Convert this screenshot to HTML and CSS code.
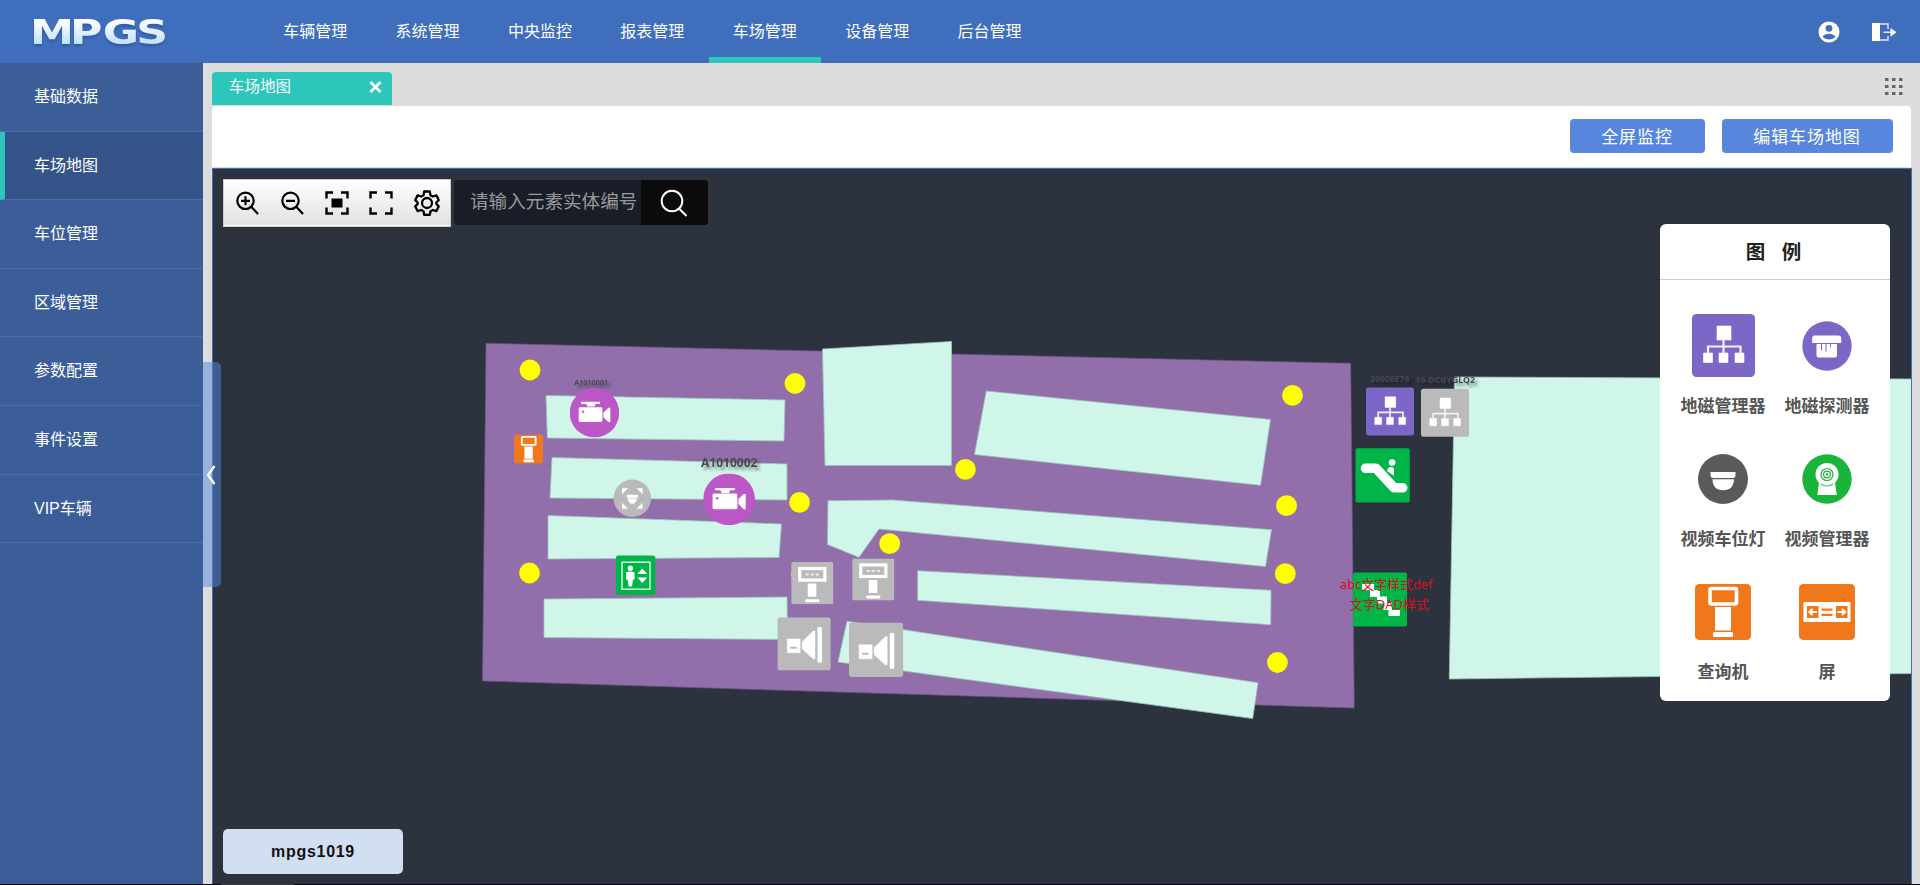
FILE: index.html
```html
<!DOCTYPE html>
<html lang="zh-CN">
<head>
<meta charset="utf-8">
<title>MPGS</title>
<link rel="stylesheet" href="styles.css">
</head>
<body>
<svg class="defs" width="0" height="0" aria-hidden="true">
  <defs>
    <symbol id="net" viewBox="0 0 63 63">
      <path d="M25 12h14v14h-14zM11.500 39h9v9.500h-9zM27 39h9v9.500h-9zM43 39h9v9.500h-9z" fill="#fff" stroke="#fff" stroke-width=".6"/>
      <path d="M31.500 25v15M16 40v-7.500h32.500v7.500" fill="none" stroke="#f3effb" stroke-width="2.200"/>
    </symbol>
    <symbol id="camera" viewBox="0 0 50 50">
      <circle cx="25" cy="25" r="25" fill="#bb57c6"/>
      <path d="M11.500 14h19v2.200h-4.500l-1 2.600h-7l-1.500-2.600h-5z" fill="#fff"/>
      <rect x="9" y="19.500" width="24" height="15" rx="1.500" fill="#fff"/>
      <path d="M34 25l5-5h2v14.500h-2l-5-5z" fill="#fff"/>
      <circle cx="13.500" cy="24" r="1.200" fill="#bb57c6"/>
    </symbol>
    <symbol id="query" viewBox="0 0 56 56">
      <rect width="56" height="56" rx="4.500" fill="#f0781a"/>
      <rect x="15" y="4.500" width="26.500" height="15.500" rx="1.500" fill="none" stroke="#fff" stroke-width="3.600"/>
      <path d="M20 23h16v23.500h-16z" fill="#fff"/>
      <rect x="18" y="48" width="20" height="5" rx="1" fill="#fff"/>
    </symbol>
    <symbol id="kiosk" viewBox="0 0 42 42">
      <rect width="42" height="42" rx="2" fill="#bababa"/>
      <rect x="8.500" y="6.500" width="25" height="11.500" fill="none" stroke="#fff" stroke-width="3.200"/>
      <path d="M14.500 11.500h3v2h-3zM19.500 11.500h3v2h-3zM24.500 11.500h3v2h-3z" fill="#eee"/>
      <path d="M16.500 21.500h8.500v13h-8.500z" fill="#fff"/>
      <rect x="14" y="37" width="14" height="3" rx="1" fill="#fff"/>
    </symbol>
    <symbol id="speaker" viewBox="0 0 54 54">
      <rect width="54" height="54" rx="3" fill="#bababa"/>
      <path d="M10 22h13v14h-13zM25 25l11-11h2v28h-2l-11-10z" fill="#fff" stroke="#fff" stroke-width=".5"/>
      <path d="M13 31h6.500" stroke="#bababa" stroke-width="2"/>
      <rect x="40.500" y="10" width="4.500" height="36" rx="1.500" fill="#fff"/>
    </symbol>
    <linearGradient id="logoFill" x1="0" y1="0" x2="0" y2="1">
      <stop offset="0.200" stop-color="#ffffff"/>
      <stop offset="0.900" stop-color="#b9dcff"/>
    </linearGradient>
  </defs>
</svg>

<header class="topbar">
  <div class="brand">
    <svg class="logo" width="170" height="44" viewBox="0 0 170 44">
      <text transform="scale(1.300 1)" x="5.400 36.100 61.400 87.200" y="36">MPGS</text>
    </svg>
  </div>
  <nav class="menu">
    <a class="menu-item">车辆管理</a>
    <a class="menu-item">系统管理</a>
    <a class="menu-item">中央监控</a>
    <a class="menu-item">报表管理</a>
    <a class="menu-item active">车场管理</a>
    <a class="menu-item">设备管理</a>
    <a class="menu-item">后台管理</a>
  </nav>
  <div class="account">
    <svg width="22" height="22" viewBox="0 0 22 22">
      <circle cx="11" cy="11" r="10.500" fill="#fff"/>
      <circle cx="11" cy="7.300" r="3.400" fill="#3f6ebc"/>
      <path d="M4.600 15.500c2.500-3.600 10.300-3.600 12.800 0c-2.500 4-10.300 4-12.800 0z" fill="#3f6ebc"/>
    </svg>
    <svg width="25" height="20" viewBox="0 0 25 20">
      <path d="M0 1h8v18h-8z" fill="#fff"/>
      <path d="M7 2h9v5M7 18h9v-4M11.500 10.300h8" fill="none" stroke="#dce6f6" stroke-width="1.400"/>
      <path d="M18.500 6l6 4.300-6 4.400z" fill="#fff"/>
    </svg>
  </div>
</header>

<div class="body">
  <aside class="sidebar">
    <a class="side-item">基础数据</a>
    <a class="side-item active">车场地图</a>
    <a class="side-item">车位管理</a>
    <a class="side-item">区域管理</a>
    <a class="side-item">参数配置</a>
    <a class="side-item">事件设置</a>
    <a class="side-item">VIP车辆</a>
    <div class="collapse">
      <svg width="10" height="20" viewBox="0 0 10 20"><path d="M8.500 1L2 10l6.500 9" fill="none" stroke="#fff" stroke-width="2.200"/></svg>
    </div>
  </aside>

  <main class="main">
    <div class="tabs">
      <div class="tab">
        <span>车场地图</span>
        <svg width="13" height="12" viewBox="0 0 13 12"><path d="M1.500 1l10 10M11.500 1l-10 10" stroke="#fff" stroke-width="2.800"/></svg>
      </div>
      <svg class="grid-icon" width="18" height="18" viewBox="0 0 18 18">
        <path d="M0 0h3.500v3h-3.500zM7 0h3.500v3h-3.500zM14 0h3.500v3h-3.500zM0 7h3.500v3h-3.500zM7 7h3.500v3h-3.500zM14 7h3.500v3h-3.500zM0 14h3.500v3h-3.500zM7 14h3.500v3h-3.500zM14 14h3.500v3h-3.500z" fill="#666"/>
      </svg>
    </div>

    <div class="actions">
      <button class="btn">全屏监控</button>
      <button class="btn wide">编辑车场地图</button>
    </div>

    <section class="map">
      <svg class="plan" width="1698" height="715" viewBox="213 169 1698 715">
        <polygon class="floor" points="486,343.300 1350.700,363.300 1354.300,708 482.500,681"/>
        <g class="block">
          <polygon points="546,395.500 785,400 784,441 547.300,438"/>
          <polygon points="552,457.500 787,464 787,500 550,498"/>
          <polygon points="548,515.500 781.500,524 779,557.500 548,559"/>
          <polygon points="544,599 787,597 787.500,639.500 544,637.500"/>
          <polygon points="822.500,349 951.500,341.500 951.500,465.500 825,465.500"/>
          <polygon points="986.300,391 1270.500,419.500 1260.500,485.300 974.500,454.500"/>
          <polygon points="828,500.700 893,500 1271.500,529.700 1265.500,566.500 879,529 859,557.300 827.500,544.500"/>
          <polygon points="917.700,570.700 1271,590.300 1270.700,624.700 917.700,600.300"/>
          <polygon points="847,621.300 1258,682.700 1252.700,718.500 838,662"/>
          <polygon points="1454.500,377 1912,379 1912,673.500 1449.300,679"/>
        </g>
        <g class="lamp">
          <circle cx="530" cy="370" r="10.400"/>
          <circle cx="795" cy="383.500" r="10.400"/>
          <circle cx="799.600" cy="502.400" r="10.400"/>
          <circle cx="529.500" cy="573" r="10.400"/>
          <circle cx="801.500" cy="574" r="10.400"/>
          <circle cx="965.400" cy="469.400" r="10.400"/>
          <circle cx="889.700" cy="543.700" r="10.400"/>
          <circle cx="1292.500" cy="395.400" r="10.400"/>
          <circle cx="1286.500" cy="505.700" r="10.400"/>
          <circle cx="1285.300" cy="573.700" r="10.400"/>
          <circle cx="1277.400" cy="662.500" r="10.400"/>
        </g>

        <text class="tag shadow" x="574.200" y="384.600" font-size="7.500" textLength="34" lengthAdjust="spacingAndGlyphs">A1010001</text>
        <use href="#camera" x="569.800" y="388" width="49.400" height="49.400"/>
        <use href="#camera" x="703.200" y="473.400" width="51.800" height="51.800"/>
        <text class="tag shadow" x="701" y="466.600" font-size="11.500" textLength="56.500" lengthAdjust="spacingAndGlyphs">A1010002</text>
        <use href="#query" x="514" y="434.500" width="29.200" height="29.200"/>

        <g transform="translate(632.300 498.300)">
          <circle r="18.700" fill="#bababa"/>
          <path d="M-10.300-4v-6h6zM10.300-4v-6h-6zM-10.300 4.500v6h6zM10.300 4.500v6h-6z" fill="#fff"/>
          <path d="M-5.500-3.500h11v3h-1c0 8-9 8-9 0h-1z" fill="#fff"/>
          <path d="M-5 0h10" stroke="#ccc" stroke-width=".8"/>
        </g>

        <g transform="translate(616 555.500)">
          <rect width="39.300" height="39.500" rx="2" fill="#00b548"/>
          <rect x="6" y="6.700" width="28" height="27" fill="none" stroke="#e5f8ec" stroke-width="1.400"/>
          <circle cx="14.300" cy="12.700" r="2.600" fill="#fff"/>
          <path d="M10 17q4.300-2 8.600 0v7h-1.600l-1 7h-3.400l-1-7h-1.600zM21.300 18.500l5-5.500 5 5.500zM21.300 22l5 5.500 5-5.500z" fill="#fff"/>
        </g>

        <use href="#kiosk" x="791.200" y="562" width="42.200" height="42.200"/>
        <use href="#kiosk" x="852.200" y="558.400" width="42.200" height="42.200"/>
        <use href="#speaker" x="777.400" y="617.200" width="53.400" height="53.400"/>
        <use href="#speaker" x="849" y="622.600" width="54.300" height="54.300"/>

        <text class="tag shadow" x="1370" y="382.400" font-size="8" textLength="39.500" lengthAdjust="spacingAndGlyphs">30606E78</text>
        <text class="tag shadow" x="1415.500" y="383.300" font-size="8" textLength="59.500" lengthAdjust="spacingAndGlyphs">16-DCGYGLQ2</text>
        <rect x="1366" y="387.600" width="48" height="48" rx="2.500" fill="#7d67c6"/>
        <use href="#net" x="1366" y="387.600" width="48" height="48"/>
        <rect x="1421" y="388.800" width="48" height="48" rx="2.500" fill="#bababa"/>
        <use href="#net" x="1421" y="388.800" width="48" height="48"/>

        <g transform="translate(1355.500 448.300)">
          <rect width="54.300" height="54.300" rx="2" fill="#00b548"/>
          <path d="M10 20h10.500L38.500 39.500h8.700" fill="none" stroke="#fff" stroke-width="9.600" stroke-linecap="round" stroke-linejoin="round"/>
          <circle cx="36.600" cy="14.300" r="3.300" fill="#fff"/>
          <path d="M31.700 23q0-4 3-4.300q3.800-.5 3.800 3v5.800z" fill="#fff"/>
        </g>

        <g transform="translate(1353 572.600)">
          <rect width="54" height="54" rx="2" fill="#00b548"/>
          <path d="M9 11.500h12v6h6v6.500h7v6.500h5v7h8v6h-11.500v-6h-5v-6.500h-6.500v-6.500h-7v-7h-8z" fill="#fff"/>
        </g>
        <text class="note" x="1340" y="588.500" textLength="92.500" lengthAdjust="spacingAndGlyphs">abc文字样式def</text>
        <text class="note" x="1349.700" y="609" textLength="79.500" lengthAdjust="spacingAndGlyphs">文字DAD样式</text>
      </svg>

      <div class="overlay">
        <div class="tools">
          <div class="toolbar">
            <svg width="24" height="26" viewBox="0 0 24 26"><g fill="none" stroke="#000" stroke-width="2.200"><circle cx="10.500" cy="10.800" r="8.200"/><path d="M16.500 17l6.500 7M6 10.800h9M10.500 6.300v9"/></g></svg>
            <svg width="24" height="26" viewBox="0 0 24 26"><g fill="none" stroke="#000" stroke-width="2.200"><circle cx="10.500" cy="10.800" r="8.200"/><path d="M16.500 17l6.500 7M6 10.800h9"/></g></svg>
            <svg width="24" height="24" viewBox="0 0 24 24"><path d="M8 1.500h-6.500v6M16 1.500h6.500v6M8 22.500h-6.500v-6M16 22.500h6.500v-6" fill="none" stroke="#000" stroke-width="2.400"/><path d="M6.500 7.500h11v9h-11z"/></svg>
            <svg width="24" height="24" viewBox="0 0 24 24"><path d="M8 1.500h-6.500v6M16 1.500h6.500v6M8 22.500h-6.500v-6M16 22.500h6.500v-6" fill="none" stroke="#000" stroke-width="2.400"/></svg>
            <svg width="26" height="26" viewBox="0 0 26 26"><g fill="none" stroke="#000" stroke-width="2.300" stroke-linejoin="round"><path d="M10.200 1.500h5.600l.7 3.700 2.300 1.300 3.600-1.200 2.300 4.800-2.300 2.400v1.500l2.300 2.400-2.300 4.700-3.600-1.100-2.300 1.300-.7 3.500h-5.600l-.7-3.500-2.300-1.300-3.600 1.100-2.300-4.700 2.300-2.400v-1.500l-2.300-2.400 2.300-4.800 3.600 1.200 2.300-1.300z"/><circle cx="13" cy="13" r="5"/></g></svg>
          </div>
          <div class="search">
            <span class="search-input">请输入元素实体编号</span>
            <span class="search-btn"><svg width="28" height="28" viewBox="0 0 28 28"><g fill="none" stroke="#fff" stroke-width="2"><circle cx="12" cy="12" r="10.300"/><path d="M19 19.500l7.500 7.500"/></g></svg></span>
          </div>
        </div>

        <aside class="legend">
          <h2 class="legend-title">图 例</h2>
          <div class="legend-grid">
            <div class="legend-item">
              <span class="legend-icon"><svg width="63" height="63"><rect width="63" height="63" rx="4.500" fill="#7d67c6"/><use href="#net" width="63" height="63"/></svg></span>
              <span>地磁管理器</span>
            </div>
            <div class="legend-item">
              <span class="legend-icon"><svg width="50" height="50" viewBox="0 0 50 50"><circle cx="25" cy="25" r="24.700" fill="#7d67c6"/><path d="M12.500 14.500h24q2.700 0 2.700 3v4.500h-29v-4.500q0-3 2.300-3z" fill="#fff"/><path d="M14.500 23h20.500v11.500q0 2-2 2h-16.500q-2 0-2-2z" fill="#fff"/><path d="M19.500 23v6.500M24 23v7.500M28.500 23v3.500" stroke="#7d67c6" stroke-width="1"/></svg></span>
              <span>地磁探测器</span>
            </div>
            <div class="legend-item">
              <span class="legend-icon"><svg width="50" height="50" viewBox="0 0 50 50"><circle cx="25" cy="25" r="25" fill="#5a5a5a"/><path d="M12.500 18h25v3q0 3-2.500 3h-20q-2.500 0-2.500-3z" fill="#fff"/><path d="M14.500 25.300h21.500q-.5 11-10.800 11t-10.700-11z" fill="#fff"/></svg></span>
              <span>视频车位灯</span>
            </div>
            <div class="legend-item">
              <span class="legend-icon"><svg width="50" height="50" viewBox="0 0 50 50"><circle cx="25" cy="25" r="24.700" fill="#19b53b"/><circle cx="25" cy="20.500" r="11.500" fill="#fff"/><path d="M17 29h16l1.800 12h-19.500z" fill="#fff"/><path d="M19 30q6 4 12 0" fill="none" stroke="#2fb6a4" stroke-width="1.200"/><g fill="none" stroke="#19b53b" stroke-width="1.200"><circle cx="25" cy="20.500" r="6"/><circle cx="25" cy="20.500" r="3.400"/></g><circle cx="25" cy="20.500" r="1.200" fill="#19b53b"/></svg></span>
              <span>视频管理器</span>
            </div>
            <div class="legend-item">
              <span class="legend-icon"><svg width="56" height="56"><use href="#query" width="56" height="56"/></svg></span>
              <span>查询机</span>
            </div>
            <div class="legend-item">
              <span class="legend-icon"><svg width="56" height="56" viewBox="0 0 56 56"><rect width="56" height="56" rx="4.500" fill="#f0781a"/><rect x="4.500" y="18" width="47" height="20" rx="1" fill="#fff"/><path d="M8 22h11.500v12h-11.500zM37 22h11.500v12h-11.500zM22.500 24.500h11v2.300h-11zM22.500 29.700h11v2.300h-11z" fill="#f0781a"/><path d="M18 28h-7.500M13.500 24.800l-3.200 3.200 3.200 3.200M38.500 28h7.500M43 24.800l3.200 3.200-3.200 3.200" fill="none" stroke="#fff" stroke-width="1.900"/></svg></span>
              <span>屏</span>
            </div>
          </div>
        </aside>

        <div class="floor-name">mpgs1019</div>
      </div>
    </section>
  </main>
</div>
<footer class="edge"><span class="edge-thumb"></span></footer>
</body>
</html>
```
FILE: styles.css
```css
* {
  box-sizing: border-box;
}

body {
  margin: 0;
  width: 1920px;
  height: 885px;
  overflow: hidden;
  display: flex;
  flex-direction: column;
  background: #dddddd;
  font-family: "Liberation Sans", "Noto Sans CJK SC", sans-serif;
  font-size: 16px;
}

svg {
  display: block;
  flex: none;
}

.defs {
  position: absolute;
}

.topbar {
  display: flex;
  height: 63px;
  flex: none;
  background: #3f6ebc;
  color: #fff;
}

.brand {
  width: 259px;
  padding: 8px 0 0 23px;
}

.logo {
  overflow: visible;
}

.logo text {
  font: bold 34px "DejaVu Sans", sans-serif;
  fill: url(#logoFill);
  filter: drop-shadow(0 2px 1px rgba(30, 60, 120, 0.45));
}

.menu {
  display: flex;
}

.menu-item {
  width: 112.400px;
  height: 63px;
  line-height: 64px;
  text-align: center;
}

.menu-item.active {
  box-shadow: inset 0 -6px #2cc6bb;
}

.account {
  display: flex;
  align-items: center;
  gap: 32px;
  margin-left: auto;
  padding-right: 23px;
}

.body {
  display: flex;
  height: 821px;
  flex: none;
}

.sidebar {
  position: relative;
  width: 203px;
  flex: none;
  background: #3b5e98;
}

.side-item {
  display: block;
  height: 68.600px;
  padding-left: 34px;
  border-bottom: 1px solid #4b6bad;
  color: #fff;
  line-height: 68px;
}

.side-item.active {
  border-left: 5px solid #2cc6bb;
  padding-left: 29px;
  background: #345388;
  line-height: 67px;
}

.collapse {
  position: absolute;
  z-index: 2;
  left: 203px;
  top: 299px;
  width: 18px;
  height: 225px;
  display: flex;
  align-items: center;
  padding-left: 3px;
  border-radius: 0 5px 5px 0;
  background: rgba(84, 136, 223, 0.500);
}

.main {
  display: flex;
  flex-direction: column;
  width: 1717px;
  padding: 9px 8px 0 9px;
}

.tabs {
  display: flex;
  justify-content: space-between;
  height: 34px;
  padding-right: 9px;
}

.tab {
  display: flex;
  align-items: center;
  justify-content: space-between;
  width: 180px;
  height: 33px;
  padding: 0 10px 3px 17px;
  border-radius: 4px 4px 0 0;
  background: #2cc6bb;
  color: #fff;
  font-size: 15.500px;
  line-height: 22px;
}

.grid-icon {
  margin-top: 6px;
}

.actions {
  display: flex;
  justify-content: flex-end;
  gap: 17px;
  width: 1699px;
  height: 62px;
  padding: 13px 18px 0 0;
  border-bottom: 1px solid #ddd;
  border-radius: 4px 4px 0 0;
  background: #fff;
}

.btn {
  width: 135px;
  height: 34px;
  padding: 0 1px 2px 0;
  border: 0;
  border-radius: 4px;
  background: #5687dc;
  color: #fff;
  font-family: inherit;
  font-size: 17px;
  letter-spacing: 0.900px;
}

.btn.wide {
  width: 171px;
}

.map {
  position: relative;
  width: 1700px;
  height: 716px;
  border: 1px solid #3f6ebc;
  border-bottom: 0;
  background: #2d323f;
}

.floor {
  fill: #926fab;
  stroke: #69517e;
  stroke-width: 0.700;
}

.block {
  fill: #cff6e9;
  stroke: #9cc5bc;
  stroke-width: 0.800;
}

.lamp {
  fill: #ffff00;
}

.tag {
  font-family: "Noto Sans", sans-serif;
  font-weight: bold;
  fill: #4b4850;
}

.shadow {
  filter: drop-shadow(3px 3px 1.500px rgba(0, 0, 0, 0.400));
}

.note {
  font-family: "Noto Sans", "Noto Sans CJK SC", sans-serif;
  font-size: 13px;
  fill: #d80f18;
}

.overlay {
  position: absolute;
  inset: 0;
  display: grid;
  grid-template-columns: 1fr 230px;
  grid-template-rows: 45px 605px 45px;
  padding: 10px 21px 0 10px;
}

.tools {
  grid-column: 1 / 3;
  display: flex;
  align-items: flex-start;
  gap: 3px;
}

.toolbar {
  display: flex;
  align-items: center;
  justify-content: space-between;
  width: 228px;
  height: 48px;
  padding: 0 10px 1px 11px;
  border: 1px solid #ccc;
  background: linear-gradient(#fff, #e1e1e1 97%, #fff 97%);
}

.search {
  display: flex;
  height: 45px;
  margin-top: 1px;
  border-radius: 4px;
  overflow: hidden;
  background: #191d27;
}

.search-input {
  width: 187px;
  padding-left: 16px;
  color: #999;
  font-size: 18.600px;
  line-height: 43px;
  white-space: nowrap;
}

.search-btn {
  display: flex;
  align-items: center;
  justify-content: center;
  width: 67px;
  padding-right: 1px;
  background: #0b0b0b;
}

.legend {
  grid-column: 2;
  height: 477px;
  border-radius: 6px;
  background: #fff;
  z-index: 1;
}

.legend-title {
  height: 56px;
  margin: 0;
  padding-right: 3px;
  border-bottom: 1px solid #ccc;
  color: #222;
  font-size: 19.500px;
  line-height: 57px;
  text-align: center;
  word-spacing: 11px;
}

.legend-grid {
  display: grid;
  grid-template-columns: 104px 104px;
  grid-auto-rows: 133px;
  justify-content: center;
  padding: 34px 0 0 0;
}

.legend-item {
  display: flex;
  flex-direction: column;
  align-items: center;
  color: #555;
  font-size: 17px;
  font-weight: bold;
  line-height: 26px;
  white-space: nowrap;
}

.legend-icon {
  display: flex;
  align-items: center;
  height: 63px;
  margin-bottom: 17px;
}

.floor-name {
  grid-column: 1;
  width: 180px;
  border-radius: 5px;
  background: #d2dff2;
  color: #111;
  font-size: 16px;
  font-weight: bold;
  line-height: 45px;
  letter-spacing: 0.700px;
  text-align: center;
}

.edge {
  height: 1px;
  padding-left: 221px;
  background: #05060c;
}

.edge-thumb {
  display: block;
  width: 73px;
  height: 1px;
  background: #36393f;
}
```
